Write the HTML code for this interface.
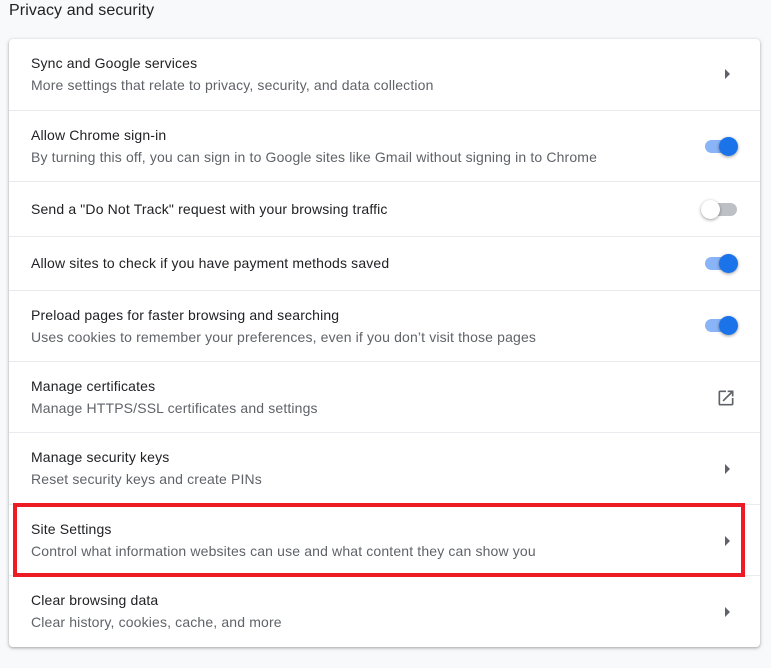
<!DOCTYPE html>
<html><head><style>
body{margin:0;background:#f8f9fa;font-family:"Liberation Sans",Arial,sans-serif;width:771px;height:668px;overflow:hidden;position:relative}
.h{position:absolute;left:9px;top:2px;font-size:16px;color:#202124;letter-spacing:0.1px}
.card{position:absolute;left:9px;top:39px;width:751px;height:608px;background:#fff;border-radius:4px;box-shadow:0 1px 2px rgba(60,64,67,.3),0 1px 3px 1px rgba(60,64,67,.15)}
.row{position:absolute;left:0;width:751px;border-top:1px solid #e8eaed;box-sizing:border-box}
.row:first-child{border-top:none}
.t{position:absolute;left:22px;font-size:14px;color:#202124;letter-spacing:0.15px}
.s{position:absolute;left:22px;font-size:14px;color:#5f6368;letter-spacing:0.15px}
.arr{position:absolute;left:716px;width:0;height:0;border-left:5px solid #5f6368;border-top:5px solid transparent;border-bottom:5px solid transparent}
.tog{position:absolute;left:696px;width:32px;height:13px;border-radius:7px;background:#8ab4f8}
.tog::after{content:"";position:absolute;left:14px;top:-3px;width:19px;height:19px;border-radius:50%;background:#1a73e8;box-shadow:0 1px 3px rgba(0,0,0,.4)}
.tog.off{background:#bdc1c6}
.tog.off::after{left:-4px;background:#fff}
.red{position:absolute;left:13px;top:503px;width:732px;height:74px;border:4px solid #ed1c24;box-sizing:border-box}
</style></head><body>
<div class="h">Privacy and security</div>
<div class="card">
<div class="row" style="top:0;height:71px"><div class="t" style="top:16px">Sync and Google services</div><div class="s" style="top:38px">More settings that relate to privacy, security, and data collection</div><div class="arr" style="top:30px"></div></div>
<div class="row" style="top:71px;height:71px"><div class="t" style="top:16px">Allow Chrome sign-in</div><div class="s" style="top:38px">By turning this off, you can sign in to Google sites like Gmail without signing in to Chrome</div><div class="tog" style="top:29px"></div></div>
<div class="row" style="top:142px;height:55px"><div class="t" style="top:19px">Send a "Do Not Track" request with your browsing traffic</div><div class="tog off" style="top:21px"></div></div>
<div class="row" style="top:197px;height:54px"><div class="t" style="top:18px">Allow sites to check if you have payment methods saved</div><div class="tog" style="top:20px"></div></div>
<div class="row" style="top:251px;height:71px"><div class="t" style="top:16px">Preload pages for faster browsing and searching</div><div class="s" style="top:38px">Uses cookies to remember your preferences, even if you don’t visit those pages</div><div class="tog" style="top:28px"></div></div>
<div class="row" style="top:322px;height:71px"><div class="t" style="top:16px">Manage certificates</div><div class="s" style="top:38px">Manage HTTPS/SSL certificates and settings</div>
<svg style="position:absolute;left:707px;top:26px" width="20" height="20" viewBox="0 0 24 24"><path fill="#5f6368" d="M19 19H5V5h7V3H5a2 2 0 0 0-2 2v14a2 2 0 0 0 2 2h14c1.1 0 2-.9 2-2v-7h-2v7zM14 3v2h3.59l-9.83 9.83 1.41 1.41L19 6.41V10h2V3h-7z"/></svg></div>
<div class="row" style="top:393px;height:72px"><div class="t" style="top:16px">Manage security keys</div><div class="s" style="top:38px">Reset security keys and create PINs</div><div class="arr" style="top:31px"></div></div>
<div class="row" style="top:465px;height:71px"><div class="t" style="top:16px">Site Settings</div><div class="s" style="top:38px">Control what information websites can use and what content they can show you</div><div class="arr" style="top:31px"></div></div>
<div class="row" style="top:536px;height:72px"><div class="t" style="top:16px">Clear browsing data</div><div class="s" style="top:38px">Clear history, cookies, cache, and more</div><div class="arr" style="top:31px"></div></div>
</div>
<div class="red"></div>
</body></html>
